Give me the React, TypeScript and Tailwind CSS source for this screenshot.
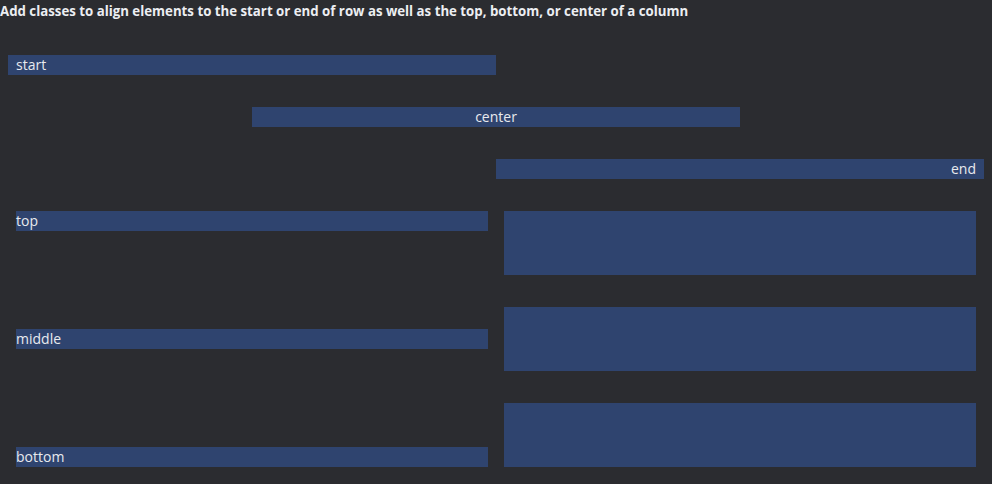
const bar = "bg-[#2f446f] text-[#e8eaee] text-[14px] leading-5 h-5";

export default function App() {
  const rows = [
    { label: "top", align: "items-start" },
    { label: "middle", align: "items-center" },
    { label: "bottom", align: "items-end" },
  ];

  return (
    <div className="min-h-screen bg-[#2b2c30] pb-[17px] font-['Open_Sans',sans-serif]">
      <h1 className="text-[13.25px] font-bold leading-[23px] text-[#eceef2]">
        Add classes to align elements to the start or end of row as well as the top, bottom, or center of a column
      </h1>

      <div className="mt-8 flex flex-col gap-8 px-2">
        {/* horizontal alignment */}
        <div className="flex justify-start">
          <div className={`${bar} w-1/2 px-2`}>start</div>
        </div>
        <div className="flex justify-center">
          <div className={`${bar} w-1/2 px-2 text-center`}>center</div>
        </div>
        <div className="flex justify-end">
          <div className={`${bar} w-1/2 px-2 text-right`}>end</div>
        </div>

        {/* vertical alignment */}
        {rows.map(({ label, align }) => (
          <div key={label} className={`flex ${align}`}>
            <div className="w-1/2 px-2">
              <div className={bar}>{label}</div>
            </div>
            <div className="w-1/2 px-2">
              <div className="h-16 bg-[#2f446f]" />
            </div>
          </div>
        ))}
      </div>
    </div>
  );
}
